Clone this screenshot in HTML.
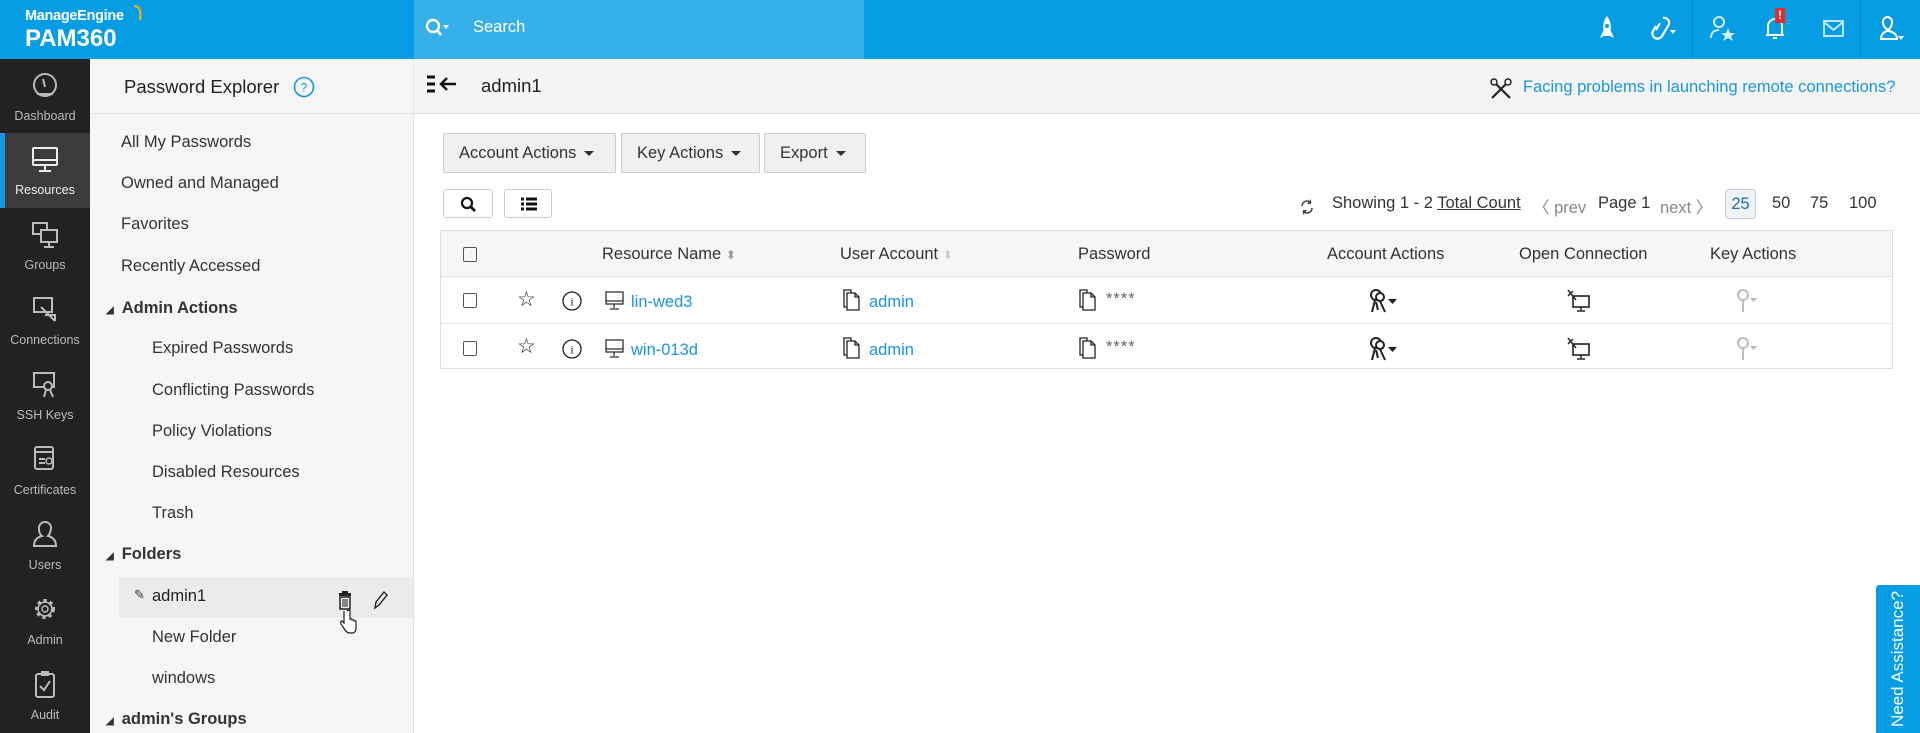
<!DOCTYPE html>
<html><head><meta charset="utf-8">
<style>
*{box-sizing:border-box;margin:0;padding:0}
body{width:1920px;height:733px;overflow:hidden;font-family:"Liberation Sans",sans-serif;background:#fff;position:relative;color:#333}
.abs{position:absolute}
#hdr{left:0;top:0;width:1920px;height:59px;background:#079de4}
#search{left:414px;top:0;width:450px;height:59px;background:#37afe8}
#nav{left:0;top:59px;width:90px;height:674px;background:#222}
.nv{position:absolute;left:0;width:90px;height:75px;color:#bbb;font-size:12.5px;text-align:center}
.nv span{position:absolute;left:0;right:0;top:50px}
.nv svg{position:absolute;left:31px;top:12px}
#lp{left:90px;top:59px;width:324px;height:674px;background:#f6f6f6;border-right:1px solid #e2e2e2}
.li{position:absolute;font-size:16.5px;color:#333;white-space:nowrap}
.b{font-weight:bold;color:#333}
#sub{left:414px;top:59px;width:1506px;height:55px;background:#f4f4f4;border-bottom:1px solid #ddd}
.btn{position:absolute;top:133px;height:40px;background:#f0f0f0;border:1px solid #ccc;border-radius:2px;font-size:16.5px;line-height:38px;padding-left:15px;color:#333}
.car{display:inline-block;width:0;height:0;border-left:5px solid transparent;border-right:5px solid transparent;border-top:5px solid #333;vertical-align:middle;margin-left:8px}
.sb{position:absolute;top:189px;height:29px;border:1px solid #ccc;border-radius:3px;background:#fff}
.t{position:absolute;font-size:16.5px;white-space:nowrap}
a,.lnk{color:#1a96dc;text-decoration:none}
</style></head><body>
<div id="hdr" class="abs"></div>
<div id="search" class="abs"></div>
<div class="abs" style="left:25px;top:8px;color:#fff;font-size:14.5px;font-weight:bold;letter-spacing:-0.3px">ManageEngine</div>
<svg class="abs" style="left:130px;top:2px" width="16" height="20"><path d="M4 4 Q12 4 10 18" stroke="#f5b400" stroke-width="2" fill="none"/></svg>
<div class="abs" style="left:25px;top:25px;color:#fff;font-size:24px;font-weight:bold">PAM360</div>
<svg class="abs" style="left:424px;top:17px" width="26" height="24"><circle cx="9" cy="9" r="6" stroke="#fff" stroke-width="2.4" fill="none"/><path d="M13 13 L17 18" stroke="#fff" stroke-width="2.6"/><path d="M19 8 L25 8 L22 12Z" fill="#fff"/></svg>
<div class="abs" style="left:473px;top:18px;color:#fff;font-size:16.5px">Search</div>
<!-- header icons -->
<svg class="abs" style="left:1597px;top:14px" width="20" height="28"><path d="M10 2 C5 8 6 16 7 22 L13 22 C14 16 15 8 10 2Z" fill="#fff"/><circle cx="10" cy="12" r="2" fill="#079de4"/><path d="M6 17 L3 24 L7 22Z M14 17 L17 24 L13 22Z" fill="#fff"/></svg>
<svg class="abs" style="left:1649px;top:14px" width="30" height="30"><path d="M14 4 a5 5 0 0 1 5 8 l-6 10 a5 5 0 0 1 -9 -5 l3 -5" stroke="#fff" stroke-width="2.2" fill="none"/><path d="M11 9 l-4 7" stroke="#fff" stroke-width="2"/><path d="M21 16 l6 0 l-3 4z" fill="#fff"/></svg>
<div class="abs" style="left:1692px;top:0;width:1px;height:59px;background:#0a86c4"></div>
<svg class="abs" style="left:1708px;top:14px" width="30" height="30"><circle cx="11" cy="8" r="5" stroke="#cfeeff" stroke-width="2" fill="none"/><path d="M3 24 c0 -6 4 -8 8 -8" stroke="#cfeeff" stroke-width="2" fill="none"/><path d="M20 14 l2 5 5 0 -4 3 2 5 -5 -3 -5 3 2 -5 -4 -3 5 0z" fill="#cfeeff"/></svg>
<svg class="abs" style="left:1763px;top:14px" width="24" height="28"><path d="M5 21 L5 12 a7 7 0 0 1 14 0 L19 21 Z M3 21 L21 21 M10 24 L14 24" stroke="#fff" stroke-width="2" fill="none"/></svg>
<div class="abs" style="left:1775px;top:8px;width:10px;height:15px;background:#e52b2b;color:#fff;font-size:12px;font-weight:bold;text-align:center;line-height:15px">!</div>
<svg class="abs" style="left:1822px;top:19px" width="24" height="20"><rect x="2" y="2" width="19" height="15" stroke="#cfeeff" stroke-width="1.8" fill="none"/><path d="M2 3 L11.5 11 L21 3" stroke="#cfeeff" stroke-width="1.8" fill="none"/></svg>
<div class="abs" style="left:1860px;top:0;width:1px;height:59px;background:#0a86c4"></div>
<svg class="abs" style="left:1877px;top:14px" width="30" height="30"><path d="M10 3 a5 5 0 0 1 5 6 q-1 5 -3 6 l0 2 q8 2 8 8 l-16 0 q0 -6 6 -8 l0 -2 q-3 -1 -4 -6 a5 5 0 0 1 4 -6z" stroke="#fff" stroke-width="2" fill="none"/><path d="M21 22 l6 0 -3 4z" fill="#fff"/></svg>

<!-- nav -->
<div id="nav" class="abs"></div>
<div class="nv" style="top:59px"><svg width="28" height="30"><circle cx="14" cy="14" r="11" stroke="#bbb" stroke-width="2" fill="none"/><path d="M12 8 L14 16" stroke="#bbb" stroke-width="2"/><path d="M6 23 L22 23" stroke="#bbb" stroke-width="2"/></svg><span>Dashboard</span></div>
<div class="nv" style="top:133px;background:#3c3c3c;color:#eee"><div style="position:absolute;left:0;top:0;width:5px;height:75px;background:#1a96dc"></div><svg width="28" height="30"><rect x="2" y="3" width="24" height="17" rx="1" stroke="#eee" stroke-width="2" fill="none"/><path d="M2 15 L26 15 M14 20 L14 25 M8 26 L20 26" stroke="#eee" stroke-width="2"/></svg><span>Resources</span></div>
<div class="nv" style="top:208px"><svg width="28" height="30"><rect x="2" y="3" width="14" height="11" stroke="#bbb" stroke-width="2" fill="none"/><rect x="10" y="10" width="16" height="12" stroke="#bbb" stroke-width="2" fill="#222"/><path d="M18 22 L18 26 M13 27 L23 27" stroke="#bbb" stroke-width="2"/></svg><span>Groups</span></div>
<div class="nv" style="top:283px"><svg width="28" height="30"><rect x="3" y="3" width="18" height="14" stroke="#bbb" stroke-width="2" fill="none"/><path d="M10 12 L24 26 M14 20 L24 20 L24 26" stroke="#bbb" stroke-width="2" fill="none"/></svg><span>Connections</span></div>
<div class="nv" style="top:358px"><svg width="28" height="30"><rect x="3" y="3" width="20" height="14" stroke="#bbb" stroke-width="2" fill="none"/><circle cx="17" cy="16" r="4" stroke="#bbb" stroke-width="2" fill="#222"/><path d="M15 20 L13 27 M19 20 L22 27" stroke="#bbb" stroke-width="2"/></svg><span>SSH Keys</span></div>
<div class="nv" style="top:433px"><svg width="28" height="30"><rect x="4" y="2" width="18" height="22" rx="2" stroke="#bbb" stroke-width="2" fill="none"/><path d="M4 7 L22 7 M8 14 L14 14 M8 18 L14 18" stroke="#bbb" stroke-width="2"/><circle cx="18" cy="16" r="3" stroke="#bbb" stroke-width="1.5" fill="none"/></svg><span>Certificates</span></div>
<div class="nv" style="top:508px"><svg width="28" height="30"><path d="M14 2 a6 6 0 0 1 6 7 q-1 5 -3 7 q8 2 8 10 l-22 0 q0 -8 8 -10 q-3 -2 -3 -7 a6 6 0 0 1 6 -7z" stroke="#bbb" stroke-width="2" fill="none"/></svg><span>Users</span></div>
<div class="nv" style="top:583px"><svg width="28" height="30"><circle cx="14" cy="14" r="8" stroke="#bbb" stroke-width="4" stroke-dasharray="3 3" fill="none"/><circle cx="14" cy="14" r="7" stroke="#bbb" stroke-width="1.5" fill="none"/><circle cx="14" cy="14" r="3" stroke="#bbb" stroke-width="1.5" fill="none"/></svg><span>Admin</span></div>
<div class="nv" style="top:658px"><svg width="28" height="30"><rect x="5" y="4" width="18" height="23" rx="2" stroke="#bbb" stroke-width="2" fill="none"/><rect x="10" y="1" width="8" height="5" fill="#bbb"/><path d="M9 16 L13 20 L19 11" stroke="#bbb" stroke-width="2" fill="none"/></svg><span>Audit</span></div>

<!-- left panel -->
<div id="lp" class="abs"></div>
<div class="abs" style="left:90px;top:59px;width:324px;height:55px;border-bottom:1px solid #e2e2e2"></div>
<div class="li" style="left:124px;top:76px;font-size:18.5px;color:#222">Password Explorer</div>
<svg class="abs" style="left:293px;top:76px" width="22" height="22"><circle cx="11" cy="11" r="9.5" stroke="#1a96dc" stroke-width="1.6" fill="none"/><text x="11" y="15.5" font-size="12" fill="#1a96dc" text-anchor="middle" font-family="Liberation Sans">?</text></svg>
<div class="li" style="left:121px;top:133px">All My Passwords</div>
<div class="li" style="left:121px;top:174px">Owned and Managed</div>
<div class="li" style="left:121px;top:215px">Favorites</div>
<div class="li" style="left:121px;top:257px">Recently Accessed</div>
<div class="li b" style="left:106px;top:299px"><span style="font-size:10px;margin-right:8px">◢</span>Admin Actions</div>
<div class="li" style="left:152px;top:339px">Expired Passwords</div>
<div class="li" style="left:152px;top:381px">Conflicting Passwords</div>
<div class="li" style="left:152px;top:422px">Policy Violations</div>
<div class="li" style="left:152px;top:463px">Disabled Resources</div>
<div class="li" style="left:152px;top:504px">Trash</div>
<div class="li b" style="left:106px;top:545px"><span style="font-size:10px;margin-right:8px">◢</span>Folders</div>
<div class="abs" style="left:119px;top:577px;width:294px;height:41px;background:#ebebeb"></div>
<div class="li" style="left:134px;top:587px;font-size:13px">✎</div>
<div class="li" style="left:152px;top:587px;color:#222">admin1</div>
<svg class="abs" style="left:337px;top:590px" width="16" height="20"><rect x="5" y="1" width="6" height="2" fill="#222"/><rect x="2" y="3" width="12" height="3" fill="#222"/><rect x="3" y="7" width="10" height="12" stroke="#222" stroke-width="1.5" fill="none"/><path d="M6 9 L6 17 M8 9 L8 17 M10 9 L10 17" stroke="#222"/></svg>
<svg class="abs" style="left:372px;top:590px" width="16" height="20"><path d="M3 18 L4 12 L12 2 L15 5 L7 15Z" stroke="#222" stroke-width="1.4" fill="none"/></svg>
<svg class="abs" style="left:338px;top:609px" width="20" height="26"><path d="M6 2 v12 l-2 -2 q-2 0 -1 3 l4 6 q2 3 5 3 l3 0 q3 -1 3 -5 v-6 q0 -2 -2 -1 q0 -2 -2 -1 q0 -2 -2 -1 v-8 q-1 -2 -3 0" stroke="#222" stroke-width="1.2" fill="#fff"/></svg>
<div class="li" style="left:152px;top:628px">New Folder</div>
<div class="li" style="left:152px;top:669px">windows</div>
<div class="li b" style="left:106px;top:710px"><span style="font-size:10px;margin-right:8px">◢</span>admin's Groups</div>

<!-- subheader -->
<div id="sub" class="abs"></div>
<svg class="abs" style="left:426px;top:75px" width="42" height="20"><path d="M1 2 H9 M1 9 H9 M1 16 H9" stroke="#111" stroke-width="3"/><path d="M30 9 H15 M21 3 L15 9 L21 15" stroke="#111" stroke-width="2.4" fill="none"/></svg>
<div class="t" style="left:481px;top:75px;font-size:18.5px;color:#222">admin1</div>
<svg class="abs" style="left:1489px;top:77px" width="24" height="24"><path d="M3 3 L21 21 M21 3 L3 21" stroke="#222" stroke-width="2.2"/><circle cx="5" cy="5" r="3" stroke="#222" stroke-width="1.5" fill="#f4f4f4"/><circle cx="19" cy="5" r="3" stroke="#222" stroke-width="1.5" fill="#f4f4f4"/></svg>
<div class="t lnk" style="left:1523px;top:78px">Facing problems in launching remote connections?</div>

<!-- buttons -->
<div class="btn" style="left:443px;width:173px">Account Actions<span class="car"></span></div>
<div class="btn" style="left:621px;width:139px">Key Actions<span class="car"></span></div>
<div class="btn" style="left:764px;width:102px">Export<span class="car"></span></div>
<div class="sb" style="left:443px;width:50px"><svg style="position:absolute;left:16px;top:6px" width="18" height="18"><circle cx="7" cy="7" r="5" stroke="#111" stroke-width="2.2" fill="none"/><path d="M11 11 L15 15" stroke="#111" stroke-width="2.8"/></svg></div>
<div class="sb" style="left:504px;width:48px"><svg style="position:absolute;left:15px;top:7px" width="18" height="16"><path d="M1 2 h3 M6 2 h11 M1 7 h3 M6 7 h11 M1 12 h3 M6 12 h11" stroke="#111" stroke-width="3"/></svg></div>

<!-- pagination -->
<svg class="abs" style="left:1299px;top:197px" width="16" height="20"><path d="M3 9 a5 5 0 0 1 9 -3 M13 11 a5 5 0 0 1 -9 3" stroke="#444" stroke-width="1.6" fill="none"/><path d="M12 2 v5 h-4z M4 18 v-5 h4z" fill="#444"/></svg>
<div class="t" style="left:1332px;top:194px;color:#333">Showing 1 - 2 <u>Total Count</u></div>
<div class="t" style="left:1533px;top:194px;color:#888">〈 prev</div>
<div class="t" style="left:1598px;top:194px;color:#333">Page 1</div>
<div class="t" style="left:1660px;top:194px;color:#888">next 〉</div>
<div class="abs" style="left:1725px;top:189px;width:31px;height:30px;background:#eef1f5;border:1px solid #ccd;border-radius:3px;color:#1a6fb0;font-size:16.5px;text-align:center;line-height:28px">25</div>
<div class="t" style="left:1772px;top:194px">50</div>
<div class="t" style="left:1810px;top:194px">75</div>
<div class="t" style="left:1849px;top:194px">100</div>

<!-- table -->
<div class="abs" style="left:440px;top:230px;width:1453px;height:139px;border:1px solid #ddd"></div>
<div class="abs" style="left:441px;top:231px;width:1451px;height:46px;background:#f6f6f6;border-bottom:1px solid #ddd"></div>
<div class="abs" style="left:441px;top:323px;width:1451px;height:1px;background:#e6e6e6"></div>
<div class="abs" style="left:463px;top:247px;width:14px;height:15px;border:1.5px solid #555;border-radius:2px"></div>
<div class="t" style="left:602px;top:245px">Resource Name <span style="color:#999;font-size:12px">⬍</span></div>
<div class="t" style="left:840px;top:245px">User Account <span style="color:#ccc;font-size:12px">⬍</span></div>
<div class="t" style="left:1078px;top:245px">Password</div>
<div class="t" style="left:1327px;top:245px">Account Actions</div>
<div class="t" style="left:1519px;top:245px">Open Connection</div>
<div class="t" style="left:1710px;top:245px">Key Actions</div>

<!-- rows -->
<div id="rows"></div>
<div class="abs" style="left:463px;top:293px;width:14px;height:15px;border:1.5px solid #555;border-radius:2px"></div>
<div class="abs" style="left:463px;top:341px;width:14px;height:15px;border:1.5px solid #555;border-radius:2px"></div>
<div class="t" style="left:517px;top:287px;font-size:21px;color:#222">☆</div>
<div class="t" style="left:517px;top:334px;font-size:21px;color:#222">☆</div>
<svg class="abs" style="left:561px;top:290px" width="22" height="22"><circle cx="11" cy="11" r="9" stroke="#222" stroke-width="1.3" fill="none"/><text x="11" y="15.5" font-size="12" text-anchor="middle" fill="#222" font-family="Liberation Serif">i</text></svg>
<svg class="abs" style="left:561px;top:338px" width="22" height="22"><circle cx="11" cy="11" r="9" stroke="#222" stroke-width="1.3" fill="none"/><text x="11" y="15.5" font-size="12" text-anchor="middle" fill="#222" font-family="Liberation Serif">i</text></svg>
<svg class="abs" style="left:605px;top:290px" width="20" height="22"><rect x="1" y="2" width="17" height="12" stroke="#333" stroke-width="1.3" fill="none"/><path d="M1 11 H18 M9 14 V18 M5 19 H14" stroke="#333" stroke-width="1.3"/></svg>
<svg class="abs" style="left:605px;top:338px" width="20" height="22"><rect x="1" y="2" width="17" height="12" stroke="#333" stroke-width="1.3" fill="none"/><path d="M1 11 H18 M9 14 V18 M5 19 H14" stroke="#333" stroke-width="1.3"/></svg>
<div class="t lnk" style="left:631px;top:293px">lin-wed3</div>
<div class="t lnk" style="left:631px;top:341px">win-013d</div>
<svg class="abs" style="left:842px;top:288px" width="22" height="24"><path d="M2 2 H9 V19 H2Z" stroke="#222" stroke-width="1.3" fill="none"/><path d="M5 5 H13 L17 9 V22 H5Z M13 5 V9 H17" stroke="#222" stroke-width="1.3" fill="#fff"/></svg>
<svg class="abs" style="left:842px;top:336px" width="22" height="24"><path d="M2 2 H9 V19 H2Z" stroke="#222" stroke-width="1.3" fill="none"/><path d="M5 5 H13 L17 9 V22 H5Z M13 5 V9 H17" stroke="#222" stroke-width="1.3" fill="#fff"/></svg>
<div class="t lnk" style="left:869px;top:293px">admin</div>
<div class="t lnk" style="left:869px;top:341px">admin</div>
<svg class="abs" style="left:1078px;top:288px" width="22" height="24"><path d="M2 2 H9 V19 H2Z" stroke="#222" stroke-width="1.3" fill="none"/><path d="M5 5 H13 L17 9 V22 H5Z M13 5 V9 H17" stroke="#222" stroke-width="1.3" fill="#fff"/></svg>
<svg class="abs" style="left:1078px;top:336px" width="22" height="24"><path d="M2 2 H9 V19 H2Z" stroke="#222" stroke-width="1.3" fill="none"/><path d="M5 5 H13 L17 9 V22 H5Z M13 5 V9 H17" stroke="#222" stroke-width="1.3" fill="#fff"/></svg>
<div class="t" style="left:1106px;top:290px;color:#666;letter-spacing:1px">****</div>
<div class="t" style="left:1106px;top:338px;color:#666;letter-spacing:1px">****</div>
<svg class="abs" style="left:1368px;top:288px" width="32" height="28"><circle cx="8" cy="7" r="5" stroke="#222" stroke-width="2" fill="none"/><circle cx="12" cy="9" r="4" stroke="#222" stroke-width="2" fill="#fff"/><path d="M7 12 L4 24 M12 13 L17 24 M8 14 L10 22" stroke="#222" stroke-width="2"/><path d="M20 11 h9 l-4.5 5z" fill="#222"/></svg>
<svg class="abs" style="left:1368px;top:336px" width="32" height="28"><circle cx="8" cy="7" r="5" stroke="#222" stroke-width="2" fill="none"/><circle cx="12" cy="9" r="4" stroke="#222" stroke-width="2" fill="#fff"/><path d="M7 12 L4 24 M12 13 L17 24 M8 14 L10 22" stroke="#222" stroke-width="2"/><path d="M20 11 h9 l-4.5 5z" fill="#222"/></svg>
<svg class="abs" style="left:1566px;top:288px" width="28" height="26"><rect x="7" y="8" width="16" height="11" stroke="#222" stroke-width="1.6" fill="none"/><path d="M15 19 V22 M11 23 H19 M2 2 L10 12 M2 8 L7 3" stroke="#222" stroke-width="1.5"/></svg>
<svg class="abs" style="left:1566px;top:336px" width="28" height="26"><rect x="7" y="8" width="16" height="11" stroke="#222" stroke-width="1.6" fill="none"/><path d="M15 19 V22 M11 23 H19 M2 2 L10 12 M2 8 L7 3" stroke="#222" stroke-width="1.5"/></svg>
<svg class="abs" style="left:1734px;top:288px" width="28" height="28"><circle cx="9" cy="7" r="5" stroke="#bbb" stroke-width="2" fill="none"/><path d="M9 12 V24" stroke="#bbb" stroke-width="2"/><path d="M16 10 h7 l-3.5 4z" fill="#bbb"/></svg>
<svg class="abs" style="left:1734px;top:336px" width="28" height="28"><circle cx="9" cy="7" r="5" stroke="#bbb" stroke-width="2" fill="none"/><path d="M9 12 V24" stroke="#bbb" stroke-width="2"/><path d="M16 10 h7 l-3.5 4z" fill="#bbb"/></svg>

<!-- need assistance -->
<div class="abs" style="left:1876px;top:585px;width:44px;height:148px;background:#079de4;border-radius:3px 0 0 0"></div>
<div class="abs" style="left:1876px;top:585px;width:44px;height:148px;"><div style="position:absolute;left:22px;top:74px;transform:translate(-50%,-50%) rotate(-90deg);color:#fff;font-size:17px;white-space:nowrap">Need Assistance?</div></div>
</body></html>
